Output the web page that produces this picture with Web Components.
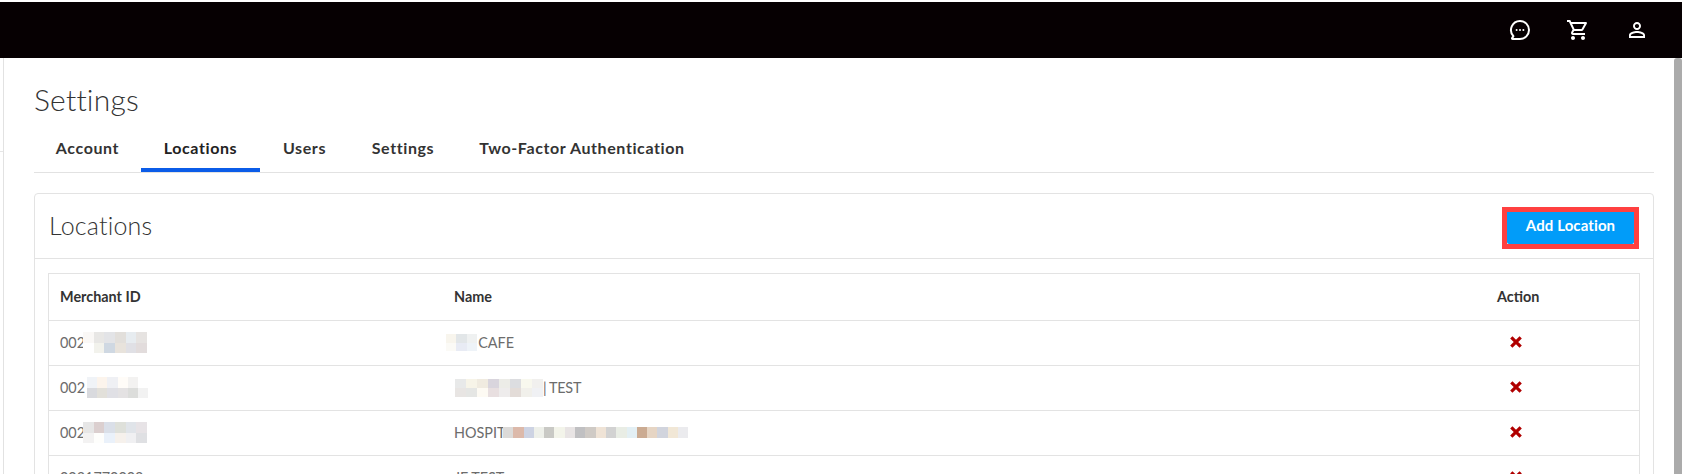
<!DOCTYPE html>
<html lang="en"><head><meta charset="utf-8"><title>Settings</title>
<style>
html,body{margin:0;padding:0;height:474px;overflow:hidden;background:#fff}
body{font-family:Lato,"Noto Sans",sans-serif;color:#333}
</style></head><body>
<app-page>
  <top-bar slot="top"></top-bar>
  <h-title>Settings</h-title>
  <tab-bar>
    <tab-item w="107">Account</tab-item>
    <tab-item w="119" active>Locations</tab-item>
    <tab-item w="89">Users</tab-item>
    <tab-item w="108">Settings</tab-item>
    <tab-item w="250">Two-Factor Authentication</tab-item>
  </tab-bar>
  <loc-card>
    <span slot="title">Locations</span>
    <add-button slot="action">Add Location</add-button>
    <loc-row head><span>Merchant ID</span><span slot="name">Name</span><span slot="action">Action</span></loc-row>
    <loc-row>
      <span class="f"><span style="width:23px">002</span><blur-blocks w="10.7" h="10.5" cols="6" c="#faf8f6,#e8e7e5,#e3e4e7,#e2dfdb,#e7ecf0,#e6e3e1,#fff,#f2f2ec,#cfd8e2,#e8e3dc,#e0e0e5,#e2dcdc"></blur-blocks></span>
      <span slot="name" class="f"><blur-blocks style="margin-left:-8px" w="10.4" h="8.5" cols="3" c="#f8f5ed,#e2e6e8,#eff1f1,#fbfaf6,#e8ebf4,#eef3f8"></blur-blocks><span style="margin-left:1px">CAFE</span></span>
      <x-icon slot="action"></x-icon>
    </loc-row>
    <loc-row>
      <span class="f"><span style="width:27px">002</span><blur-blocks w="10.2" h="10.5" cols="6" c="#f0f3f7,#fcf4ec,#eff0f4,#fffcf8,#f3f2f1,#fff,#d9dade,#e2e0da,#e0e0e5,#e4e2e3,#dcdddb,#f2f2f2"></blur-blocks></span>
      <span slot="name" class="f"><blur-blocks style="margin-left:1px" w="11" h="9" cols="8" c="#e8e9e9,#f7f4e8,#f0ebe0,#d9d5dd,#ecece7,#dcdde0,#f8f8ee,#f1f0ee,#e8e5e3,#e5e6e4,#fdfaf3,#e8dfe0,#eeecec,#e3dcd8,#f1f0eb,#f0f1f4"></blur-blocks><span style="word-spacing:-.5px;letter-spacing:-.2px">| TEST</span></span>
      <x-icon slot="action"></x-icon>
    </loc-row>
    <loc-row>
      <span class="f"><span style="width:23px">002</span><blur-blocks w="10.7" h="10.5" cols="6" c="#e6e6e6,#dbcfcf,#dadfe8,#dee0da,#e0e4e9,#e7e3e6,#f3f2f2,#fefefc,#eaf1fa,#f6f1ec,#f0f0f2,#dfe0e3"></blur-blocks></span>
      <span slot="name" class="f"><span style="width:49px">HOSPIT</span><blur-blocks w="10.3" h="11" cols="18" c="#dcdad8,#dcb9aa,#cdd3e3,#eef0ea,#c9c9c5,#f3f4ea,#e8e4e4,#c0c0c2,#cfcac5,#efe3d6,#d2d2d2,#e9ede5,#e3eff4,#cbab92,#e6d5c4,#d1d4dd,#f1e7d6,#ebebee"></blur-blocks></span>
      <x-icon slot="action"></x-icon>
    </loc-row>
    <loc-row>
      <span>0021770002</span>
      <span slot="name">JF TEST</span>
      <x-icon slot="action"></x-icon>
    </loc-row>
  </loc-card>
</app-page>
<script>
function def(name, css, html, init){
  customElements.define(name, class extends HTMLElement{
    constructor(){super();this.attachShadow({mode:'open'}).innerHTML='<style>'+css+'</style>'+html;}
    connectedCallback(){ if(init) init(this); }
  });
}
def('app-page',`
 :host{display:flex;flex-direction:column;height:474px;padding-top:2px;box-sizing:border-box;overflow:hidden}
 .row{display:flex;flex:1;min-height:0}
 .rail{width:3px;border-right:1px solid #e2e2e2;flex:none;display:flex;flex-direction:column}
 .rail i{display:block;height:1px;background:#e6e6e6;margin-top:93px}
 main{flex:1;min-width:0;padding:0 20px 0 30px;overflow:hidden}
 .sb{width:8px;flex:none;background:#ababab;border-radius:3px 3px 0 0}
`,`<slot name="top"></slot><div class="row"><div class="rail"><i></i></div><main><slot></slot></main><div class="sb"></div></div>`);
def('top-bar',`
 :host{display:flex;justify-content:flex-end;align-items:center;height:56px;background:#060002;padding-right:33px;gap:34px;flex:none}
 svg{width:24px;height:24px;display:block;fill:#fff}
`,`<svg viewBox="0 0 24 24"><path fill="none" stroke="#fff" stroke-width="2" stroke-linejoin="round" d="M12 3a9 9 0 1 1 0 18H4.6a.6.6 0 0 1-.5-.9l1.3-2A9 9 0 0 1 12 3z"/><circle cx="8.6" cy="12" r="1"/><circle cx="12" cy="12" r="1"/><circle cx="15.4" cy="12" r="1"/></svg>
<svg viewBox="0 0 24 24"><path d="M15.55 13c.75 0 1.41-.41 1.75-1.03l3.58-6.49c.37-.66-.11-1.48-.87-1.48H5.21l-.94-2H1v2h2l3.6 7.59-1.35 2.44C4.52 15.37 5.48 17 7 17h12v-2H7l1.1-2h7.45zM6.16 6h12.15l-2.76 5H8.53L6.16 6zM7 18c-1.1 0-1.99.9-1.99 2S5.9 22 7 22s2-.9 2-2-.9-2-2-2zm10 0c-1.1 0-1.99.9-1.99 2s.89 2 1.99 2 2-.9 2-2-.9-2-2-2z"/></svg>
<svg viewBox="0 0 24 24" style="margin-left:1px"><path d="M12 5.9c1.16 0 2.1.94 2.1 2.1s-.94 2.1-2.1 2.1S9.9 9.16 9.9 8s.94-2.1 2.1-2.1m0 9c2.97 0 6.1 1.46 6.1 2.1v1.1H5.9V17c0-.64 3.13-2.1 6.1-2.1M12 4C9.79 4 8 5.79 8 8s1.79 4 4 4 4-1.79 4-4-1.79-4-4-4zm0 9c-2.67 0-8 1.34-8 4v3h16v-3c0-2.66-5.33-4-8-4z"/></svg>`);
def('h-title',`:host{display:block;font:300 30px/36px Lato,"Noto Sans",sans-serif;color:#333;padding-top:23px;height:47px;letter-spacing:.2px}`,`<slot></slot>`);
def('tab-bar',`:host{display:flex;border-bottom:1px solid #e2e2e2;height:44px;margin-bottom:20px}`,`<slot></slot>`);
def('tab-item',`
 :host{display:block;box-sizing:border-box;text-align:center;font:700 16px/40px Lato,"Noto Sans",sans-serif;color:#333;height:44px;letter-spacing:.6px;white-space:nowrap}
 :host([active]){border-bottom:4px solid #0b5ce8;color:#222}
`,`<slot></slot>`,el=>{el.style.width=el.getAttribute('w')+'px'});
def('loc-card',`
 :host{display:block;border:1px solid #e3e3e3;border-radius:4px;background:#fff}
 header{display:flex;justify-content:space-between;align-items:flex-start;height:65px;padding:13px 14px 0;box-sizing:border-box;border-bottom:1px solid #e3e3e3}
 .t{font:300 25px/34px Lato,"Noto Sans",sans-serif;color:#333;padding-top:1px;letter-spacing:.2px}
 .b{padding:14px 13px 0}
 .tbl{border:1px solid #e3e3e3;border-bottom:0}
`,`<header><div class="t"><slot name="title"></slot></div><slot name="action"></slot></header><div class="b"><div class="tbl"><slot></slot></div></div>`);
def('add-button',`
 :host{display:block;width:137px;height:42px;box-sizing:border-box;border:5px solid #ff4040;background:#fff;flex:none}
 div{height:100%;background:#019cf9;color:#fff;font:700 15px/26px Lato,"Noto Sans",sans-serif;text-align:center;border-radius:0 0 2px 2px;letter-spacing:.1px;white-space:nowrap}
`,`<div><slot></slot></div>`);
def('loc-row',`
 :host{display:grid;grid-template-columns:394px 1fr 153px;height:45px;box-sizing:border-box;border-bottom:1px solid #e3e3e3;align-items:center;font:400 14.4px/20px Lato,"Noto Sans",sans-serif;color:#6c6c6c}
 :host([head]){height:47px;font-weight:700;color:#333}
 .c{padding-left:11px;display:flex;align-items:center;padding-bottom:1px}
 ::slotted(.f){display:flex;align-items:center;white-space:nowrap}
`,`<div class="c"><slot></slot></div><div class="c"><slot name="name"></slot></div><div class="c"><slot name="action"></slot></div>`);
def('x-icon',`:host{display:block;width:12px;height:12px;margin:0 0 2px 13px}svg{display:block;width:12px;height:12px}`,`<svg viewBox="0 0 12 12"><path d="M1.3 1.3l9.4 9.4M10.7 1.3l-9.4 9.4" stroke="#b00000" stroke-width="3.2" fill="none"/></svg>`);
customElements.define('blur-blocks', class extends HTMLElement{
  constructor(){super();this.attachShadow({mode:'open'});}
  connectedCallback(){
    const w=this.getAttribute('w'),h=this.getAttribute('h'),cols=this.getAttribute('cols');
    const cs=this.getAttribute('c').split(',');
    this.shadowRoot.innerHTML=`<style>:host{display:inline-grid;grid-template-columns:repeat(${cols},${w}px);grid-auto-rows:${h}px;flex:none}</style>`+cs.map(c=>`<div style="background:${c}"></div>`).join('');
  }
});
</script>
</body></html>
